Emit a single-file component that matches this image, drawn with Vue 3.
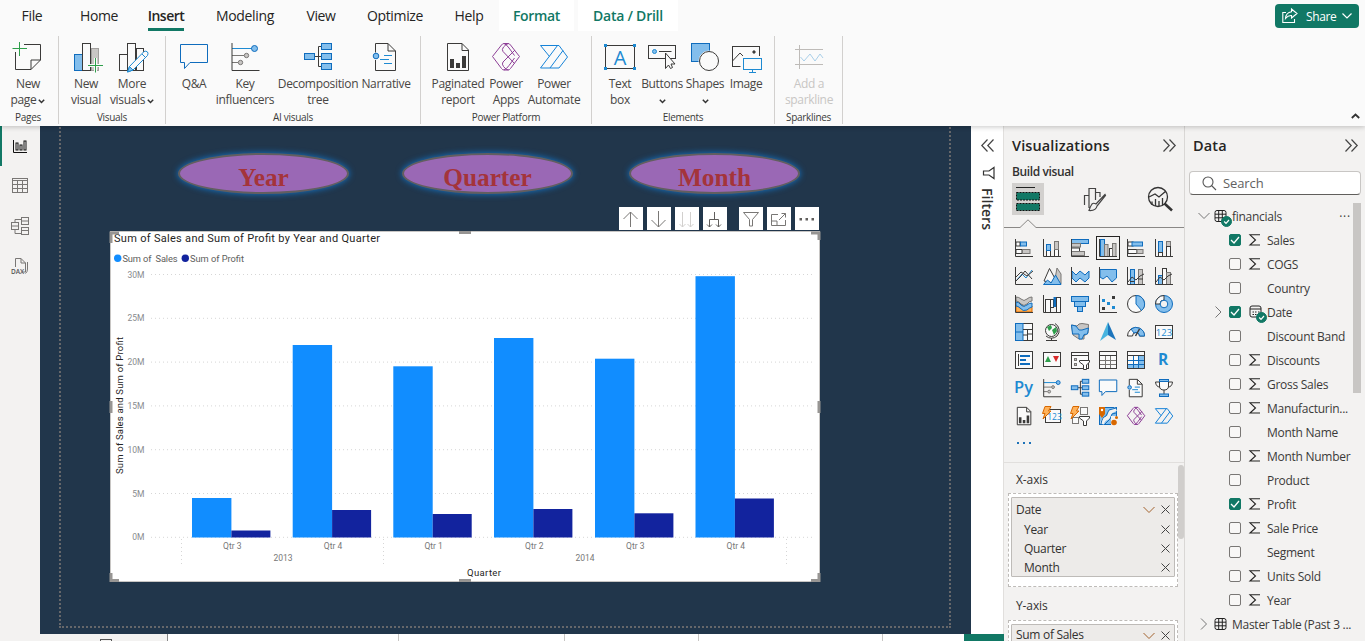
<script setup>
const K = '#3b3a39', B = '#0f6cbd', F = '#83beec', G = '#c8c6c4', GS = '#797775', W = '#fafafa', L = '#1e8ad2', P = '#8e3f97', N = '#2e9f4b', O = '#d86800'
const r = (x, y, w, h, f = 'none', s = K) => `<rect x="${x}" y="${y}" width="${w}" height="${h}" fill="${f}" stroke="${s}"/>`
const p = (d, s = K, f = 'none', w = 1) => `<path d="${d}" stroke="${s}" fill="${f}" stroke-width="${w}"/>`
const c = (x, y, q, f = 'none', s = K) => `<circle cx="${x}" cy="${y}" r="${q}" fill="${f}" stroke="${s}"/>`
const t = (x, y, size, s, f, w = 400) => `<text x="${x}" y="${y}" font-size="${size}" fill="${f}" font-weight="${w}" font-family="Open Sans, sans-serif" text-anchor="middle">${s}</text>`

const influencers = p('M2 6.5H22', L) + p('M2 13.5H14M2 20.5H8', GS) + p('M2 1V28.5H29.5') + c(24.5, 6.5, 3, F, B) + c(16.5, 13.5, 2.2, G, GS) + c(10.5, 20.5, 2.2, G, GS)
const decomposition = p('M11.5 14.5H18.5M18.5 4.5H15.5V24.5H18.5') + r(1.5, 11.5, 10, 6, F, B) + r(18.5, 1.5, 10, 6, F, B) + r(18.5, 11.5, 10, 6, F, B) + r(18.5, 21.5, 10, 6, F, B)
const bubble = p('M1.5 2.5H28.5V20.5H11L5.5 26.5V20.5H1.5Z', B, W)
const narrative = p('M4.5 10.5V1.5H17L24.5 9V28.5H4.5V18', K, W) + p('M17 1.5V9H24.5') + p('M13 13.5H21M9 17.5H18M13 21.5H21', L) + c(5, 14, 2.8, F, B)
const paginated = p('M4.5 1.5H19L25.5 8V28.5H4.5Z', K, W) + p('M19 1.5V8.5H25.5') + p('M9 17V26M15 21V26M21 14V26', K, 'none', 4)
const apps = p('M1.5 14.5L10.5 3Q11.5 1.5 13 1.5H17Q18.5 1.5 19.5 3L28.5 14.5L19.5 26.5Q18.5 28 17 28H13Q11.5 28 10.5 26.5Z', P) + p('M17.5 1.5Q15 2 12.5 5Q10.500 7.500 12 9.500L23.500 21.500M24 8L12 20Q10.500 22 12.500 24.500Q15 28 17.500 28M13 1.500Q15.500 2.500 18 6L23.500 13.500M13 28Q15.500 27 18 23.500L23.500 16', P)
const automate = p('M1.5 3.5H20L28.5 15L20 26H1.5L18.5 3.5M1.5 3.5L10.5 14.5M11 26L24 8.5', '#1683d8')

const ribbon = {
  page: p('M2.5 10V27.5H18L27.5 18V2.5H11M18 27.5V18H27.5') + p('M6.5 0V14M-.5 6.5H14', N),
  newVisual: r(3.5, 12.5, 8, 16, F, B) + r(20.5, 6.5, 7, 22, G, '#a19f9d') + r(11.5, 1.5, 8, 27, W) + p('M24.5 16V30.5M17 23.5H32', W, 'none', 3) + p('M24.5 16V30.5M17 23.5H32', N),
  more: r(2.5, 12.5, 8, 16, W) + r(19.5, 6.5, 7, 22, W) + r(10.5, 1.5, 8, 27, W) + p('M27 9.5Q29 8.5 30.5 10Q31.5 11.5 30.5 13.5L16 28L10.5 30L12.5 24.5Z', L, W) + p('M12.5 24.5L16 28L10.5 30Z', L, F) + p('M25 12L28.5 15.5', L),
  qa: bubble, key: influencers, decomp: decomposition, narrative, paginated, apps, automate,
  text: r(.5, 3.5, 29, 23, W) + `<path fill="${L}" d="M-1 2h3v3h-3zM28 2h3v3h-3zM-1 25h3v3h-3zM28 25h3v3h-3z"/>` + t(15, 22.5, 20, 'A', L),
  buttons: r(1.5, 3.5, 27, 13, W) + c(7.5, 9.5, 2, F, L) + p('M12 9.5H24.5') + p('M18.5 11V26.5L21.5 23L23.5 26.5L25.5 25.5L24 22H28Z', K, W),
  shapes: r(1.5, 1.5, 18, 18, F, B) + c(19, 19, 10, W, W) + c(19, 19, 9.5, W, K),
  image: r(1.5, 4.5, 27, 20, W) + p('M1.5 19L9 11L15 17') + c(23, 10, 1.2, K, K) + p('M11 15.5H31.5V29H11Z', W, W, 3) + r(12.5, 16.5, 18, 11, W, L) + p('M21.5 27.5V30.5M18 30.5H25', L),
  spark: p('M1 7.5H29M1 22.5H29M5.5 3V27', '#bebbb8') + p('M6.5 15L10 19L16 12L21 19L26 12L29 16', '#a9cfe9'),
}
const groups = [
  { name: 'Pages', w: 59, pad: 0, items: [['page', 56, 'New', 'page', 1]] },
  { name: 'Visuals', w: 107, pad: 4, items: [['newVisual', 46, 'New', 'visual'], ['more', 46, 'More', 'visuals', 1]] },
  { name: 'AI visuals', w: 255, pad: 8, items: [['qa', 40, 'Q&A', ''], ['key', 62, 'Key', 'influencers'], ['decomp', 84, 'Decomposition', 'tree'], ['narrative', 52, 'Narrative', '']] },
  { name: 'Power Platform', w: 171, pad: 8, items: [['paginated', 58, 'Paginated', 'report'], ['apps', 38, 'Power', 'Apps'], ['automate', 58, 'Power', 'Automate']] },
  { name: 'Elements', w: 183, pad: 8, items: [['text', 40, 'Text', 'box'], ['buttons', 44, 'Buttons', '', 1], ['shapes', 42, 'Shapes', '', 1], ['image', 40, 'Image', '']] },
  { name: 'Sparklines', w: 68, pad: 2, off: 1, items: [['spark', 64, 'Add a', 'sparkline']] },
]
const tabs = [['File', 64], ['Home', 70], ['Insert', 64], ['Modeling', 94], ['View', 58], ['Optimize', 90], ['Help', 58]]

const ax = p('M1.5 1V18.5H19')
const mini = s => `<g transform="scale(.645) translate(.6 .6)" stroke-width="1.55">${s.replaceAll('stroke-width="1"', 'stroke-width="1.55"')}</g>`
const bolt = p('M3 .5H9L6.5 5H9L1 13L3 7.5H.5Z', O, '#ffb25a')
const funnel = p('M9.5 10.5H19.5V12L16.5 15V19.5H13.5V15L9.5 12Z', K, '#fff')
const viz = [
  r(2, 4, 4, 4, W) + r(6.5, 4, 6, 4, F, B) + r(2, 11.5, 6, 4, W) + r(8.5, 11.5, 7.5, 4, G, GS) + ax,
  r(4.5, 12.5, 4, 6, W) + r(4.5, 6.5, 4, 6, F, B) + r(12.5, 11.5, 4, 7, W) + r(12.5, 3.5, 4, 8, G, GS) + ax,
  r(1.5, 1.5, 17, 4, F, B) + r(1.5, 5.5, 9, 3.5, G, GS) + r(1.5, 10, 8, 3.5, W) + r(1.5, 13.5, 13, 4, G, GS) + ax,
  r(2.5, 1.5, 4, 17, F, B) + r(6.5, 6.5, 3.5, 12, G, GS) + r(11.5, 10.5, 3, 8, W) + r(14.5, 5.5, 3.5, 13, G, GS) + ax,
  r(2, 4, 5, 4, W) + r(6, 4, 10.5, 4, F, B) + r(2, 11.5, 9, 4, W) + r(11, 11.5, 6, 4, G, GS) + ax,
  r(4.5, 3.5, 4, 11, F, B) + r(4.5, 14.5, 4, 4, W) + r(12.5, 3.5, 4, 5, G, GS) + r(12.5, 8.5, 4, 10, W) + ax,
  p('M2 15L8 8L12 12L18 4', L) + p('M2 11L7 6L13 10L19 5') + p('M2 15L7 10L11 5L18 13') + ax,
  p('M12 18L15 2L19 8V18Z', GS, G) + p('M2 15L7.5 2.5L16 18Z', K, W) + p('M1.500 18.500L5.500 14L9 17L13.500 9L19 18.500Z', B, F),
  p('M2 5L6 9L10 5L15 9L19 5V12L15 16L10 12L6 16L2 12Z', B, F) + ax,
  p('M2 3.5H18.5V12L14 16L9 10L5 13L2 11Z', B, F) + ax,
  r(4.5, 3.5, 4, 15, F, B) + r(12.5, 3.5, 4, 15, G, GS) + p('M2 16L6 11L10 14L14 10L18 8') + p('M4 15.5h4.5M12 13h5', K, W) + ax,
  r(4.5, 9.5, 4, 9, F, B) + r(8.5, 2.5, 4, 16, W) + r(12.5, 6.5, 4, 12, G, GS) + p('M2 16L6 11L10 14L14 10L18 8') + ax,
  p('M2 9H7L10 16L13 12H18V18H2Z', O, '#ffb25a') + p('M2 3Q5 3 7 5Q10 8 13 5Q15 3 18 3V7Q15 7 13 10Q10 13 7 10Q5 7 2 7Z', GS, G) + p('M2 8Q5 8 7 11Q10 14 13 11Q15 9 18 9V13Q15 14 13 16Q9 18 6 14Q4 12 2 12Z', B, F) + ax,
  r(3.5, 5.5, 5, 13, W) + r(8.5, 5.5, 3, 8, W) + p('M13 3V13', B, F, 3) + r(14.5, 3.5, 4, 15, W) + ax,
  r(1.5, 2.5, 17, 5, F, B) + r(4.5, 7.5, 11, 5, F, B) + r(7.5, 12.5, 5, 5, F, B),
  `<path fill="${L}" d="M4 5h3v3H4zM9 8h3v3H9zM14 12h3v3h-3z"/><path fill="${K}" d="M14 2h3v3h-3zM4 13h3v3H4z"/>` + ax,
  c(10, 10, 8.5, W) + p('M10 10V1.5A8.5 8.5 0 0 1 15.5 16.5Z', B, F),
  c(10, 10, 8.5, F, B) + p('M10 1.5A8.5 8.5 0 0 0 1.5 10H6A4 4 0 0 1 10 6Z', K, W) + c(10, 10, 3.8, '#f3f2f1', B),
  r(1.5, 1.5, 17, 17, W) + r(1.5, 1.5, 7.5, 17, F, B) + p('M1.5 10H9', B) + p('M9 7.5H18.5M13.5 7.5V18.5M9 13H13.5M13.5 12H18.5'),
  c(9.5, 8.5, 6, W) + `<path fill="${N}" d="M5 5l4-2 1 3-3 3zM10 8l4-3 1 4-3 4z"/>` + p('M13 1.5A8 8 0 0 1 15 14A8 8 0 0 1 4 14M9.5 16V18.5M4 18.5H15'),
  p('M1.5 3L7 4L9 2L12 1.500L18.500 2.500L18 11L14 14V17H9L3 13Z', GS, G) + p('M1.5 3L6 4L9 8L12 8L18.500 6L17.500 12L14 12.500L12 17H9V12H2.500Z', B, F),
  `<path fill="#1c75bc" d="M10 0L18 18L10 13Z"/><path fill="#48b4df" d="M10 0L10 13L2 19Z"/>`,
  p('M1.5 14A8.5 8.5 0 0 1 18.5 14H13.5A3.5 3.5 0 0 0 6.5 14Z', K, W) + p('M5 7A8.5 8.5 0 0 1 18.5 14H13.5A3.5 3.5 0 0 0 8 11Z', B, F) + p('M13.5 7L9.5 14', K, 'none', 1.5),
  r(1.5, 3.5, 17, 13, W) + t(10, 13.5, 9.5, '123', L),
  r(1.5, 1.5, 17, 17, W) + p('M4.500 4V16') + p('M6 6H16M6 10H12M6 14H16', B, 'none', 2),
  r(1.5, 2.5, 17, 14, W) + `<path fill="${N}" d="M3 12h6L6 6z"/><path fill="#d92c2c" d="M11 6h6l-3 6z"/>`,
  r(1.5, 2.5, 17, 16, W) + p('M1.5 5.5H18.5') + r(4.5, 8.5, 2, 2, G, GS) + r(4.5, 13.5, 2, 2, G, GS) + funnel,
  r(1.5, 1.5, 17, 17, W) + p('M1.5 10.5H18.5M1.5 14.5H18.5M7.500 6V18.5M12.500 6V18.5', GS) + r(1.5, 1.5, 17, 17) + p('M1.5 5.500H18.5'),
  r(1.5, 1.5, 17, 17, W) + `<path fill="${F}" d="M13 6h5.500v12h-5.500zM2 14.500h16V18H2z"/>` + p('M1.5 10.5H18.5M1.5 14.5H18.5M7.500 6V18.5M12.500 6V18.5', B) + r(1.5, 1.5, 17, 17) + p('M1.5 5.500H18.5'),
  t(9, 15, 15.5, 'R', L, 700),
  t(9.5, 15, 16.5, 'Py', L, 600),
  mini(influencers), mini(decomposition), mini(bubble), mini(narrative),
  p('M5.5 1.5H14.5V8Q14.500 12 10 12Q5.500 12 5.500 8ZM5.500 4H1.500Q2 9 6 9M14.500 4H18.500Q18 9 14 9M10 12V16', K, W) + r(5.5, 1.5, 9, 2, F, B) + r(5.5, 16, 9, 2.5, F, B),
  mini(paginated),
  r(3.5, 3.5, 15, 13, W) + t(12.500, 14, 8.500, '123', L) + bolt,
  r(10.5, 1.5, 7, 7, W, GS) + r(2.5, 11.500, 6, 6, W, GS) + funnel + bolt,
  r(1.5, 1.5, 17, 17, F, B) + p('M4 18Q5 13 9 12Q12 11 12 6L18 3', '#f3f2f1', 'none', 4) + p('M3 18Q4 11 8 10L11 4L18 2M7 18L12 13L14 8L18 7', B) + `<path fill="${O}" d="M1 1h6v7l-3 4-3-4z"/><circle cx="4" cy="4" r="1.200" fill="#fff"/><rect x="13" y="10" width="7" height="10" fill="#f3f2f1"/><circle cx="16" cy="16.500" r="2.800" fill="${O}"/><circle cx="18.500" cy="11.500" r="1.500" fill="${O}"/>`,
  mini(apps), mini(automate),
]

const nav = [
  p('M3.500 4V16.500H17', '#111') + r(6, 7, 2, 7, 'none', '#111') + r(10, 9, 2, 5, 'none', '#111') + r(14, 5, 2, 9, 'none', '#111'),
  r(2.500, 2.500, 15, 14, 'none', GS) + p('M2.500 4.500H17.500M2.500 8.500H17.500M2.500 12.500H17.500M7.500 4.500V16.500M12.500 4.500V16.500', GS),
  r(1.500, 6.500, 7, 7, 'none', GS) + r(11.500, 1.500, 7, 7, 'none', GS) + r(11.500, 11.500, 7, 7, 'none', GS) + p('M1.500 10H8.500M11.500 5H18.500M11.500 14.500H18.500M5 6V3.500H11.500M5 14V17.500H11.500', GS),
  p('M5.500 11V2.500H11L15.500 7V16H12M11 2.500V7H15.500M17.500 6V13Q17.500 16 15.500 17.500', GS) + t(7.500, 17.500, 6.500, 'DAX', '#555', 600),
]
const tools = [
  p('M11.500 20V5M4.500 12L11.500 5L18.500 12', '#797775'), p('M11.500 4V20M4.500 13L11.500 20L18.500 13', '#797775'),
  p('M7.500 5V20M4.500 17L7.500 20L10.500 17M15.500 5V20M12.500 17L15.500 20L18.500 17', '#d2d0ce'),
  p('M11.500 5V12.500M6.500 20V12.500H15.500V20M4 17.500L6.500 20L9 17.500M13 17.500L15.500 20L18 17.500', '#605e5c'),
  p('M4.500 5.500H19.500L13.500 12.500V19H10.500V12.500Z', '#797775'),
  p('M11 7.500H4.500V18.500H18.500V13M4.500 14H10V18.500M12 13L18.500 6.500M14.500 6.500H18.500V10.500', '#797775'),
  `<path fill="#605e5c" d="M4.500 11h2.500v2.500h-2.500zM10.500 11h2.500v2.500h-2.500zM16.500 11h2.500v2.500h-2.500z"/>`,
]
const bars = [
  [192, 498, 530.5, 'Qtr 3'], [292.7, 345, 510, 'Qtr 4'], [393.3, 366.3, 514, 'Qtr 1'],
  [494, 338, 509, 'Qtr 2'], [595, 358.7, 513.3, 'Qtr 3'], [695.5, 276.2, 498.5, 'Qtr 4'],
]
const ticks = [30, 25, 20, 15, 10, 5, 0].map(v => ({ v: v + 'M', y: 537.3 - v * 8.76 }))
const fields = [
  ['Sales', 1, 1], ['COGS', 0, 1], ['Country', 0, 0], ['Date', 1, 2], ['Discount Band', 0, 0], ['Discounts', 0, 1], ['Gross Sales', 0, 1],
  ['Manufacturin...', 0, 1], ['Month Name', 0, 0], ['Month Number', 0, 1], ['Product', 0, 0], ['Profit', 1, 1], ['Sale Price', 0, 1],
  ['Segment', 0, 0], ['Units Sold', 0, 1], ['Year', 0, 1],
]
</script>

<template>
  <div class="app">
    <header class="ribbon">
      <nav class="tabs">
        <span v-for="[name, w] in tabs" :key="name" class="tab" :class="{ active: name === 'Insert' }" :style="{ width: w + 'px' }"><b>{{ name }}</b></span>
        <span class="tab ctx format"><b>Format</b></span>
        <span class="tab ctx drill"><b>Data / Drill</b></span>
        <button class="share">
          <svg width="16" height="16" fill="none" stroke="#fff" stroke-width="1.1"><path d="M4 4.500H.800V14.500H12.500V11M9.500 1L15 5.500L9.500 10V7.500Q6 7.200 3.500 10.500Q4 4.500 9.500 3.800Z" /></svg>
          <span>Share</span>
          <svg width="10" height="6" fill="none" stroke="#fff" stroke-width="1.2"><path d="M.5 .5L5 5L9.500 .5" /></svg>
        </button>
      </nav>
      <div class="groups">
        <section v-for="g in groups" :key="g.name" class="group" :style="{ width: g.w + 'px' }">
          <div class="items" :style="{ paddingLeft: g.pad + 'px' }">
            <div v-for="i in g.items" :key="i[0]" class="item" :class="{ off: g.off }" :style="{ width: i[1] + 'px' }">
              <svg width="30" height="30" fill="none" v-html="ribbon[i[0]]" />
              <span>{{ i[2] }}</span>
              <span class="second">{{ i[3] }}<svg v-if="i[4]" width="7" height="5" fill="none" stroke="#333" stroke-width="1.500"><path d="M.8 .8L3.500 3.500L6.200 .8" /></svg></span>
            </div>
          </div>
          <div class="gname" :style="{ paddingRight: g.name === 'Pages' ? '2px' : 0 }">{{ g.name }}</div>
        </section>
        <svg class="collapse" width="9" height="6" fill="none" stroke="#333" stroke-width="1.800"><path d="M.8 5L4.500 1.500L8.200 5" /></svg>
      </div>
    </header>

    <div class="body">
      <aside class="nav">
        <div v-for="(n, i) in nav" :key="i" class="navitem" :class="{ on: i === 0 }"><svg width="20" height="20" fill="none" v-html="n" /></div>
      </aside>
      <div class="work">
        <div class="upper">
          <main class="canvas">
            <div class="paper" />
            <div class="slicer s1"><span>Year</span></div>
            <div class="slicer s2"><span>Quarter</span></div>
            <div class="slicer s3"><span>Month</span></div>
            <div class="toolbar">
              <span v-for="(b, i) in tools" :key="i" class="tool" :class="{ gap: i === 4 }"><svg width="24" height="23" fill="none" v-html="b" /></span>
            </div>
            <svg class="chart" width="712" height="352" viewBox="109 231 712 352">
              <rect x="110.500" y="231.500" width="709" height="350" fill="#fff" stroke="#c8c6c4" />
              <text x="114" y="242" font-size="11" fill="#252423" textLength="266">Sum of Sales and Sum of Profit by Year and Quarter</text>
              <circle cx="117.700" cy="258.300" r="3.700" fill="#118dff" /><text x="122.500" y="262" font-size="9.300" fill="#605e5c" textLength="55">Sum of&nbsp; Sales</text>
              <circle cx="185.300" cy="258.300" r="3.700" fill="#12239e" /><text x="190" y="262" font-size="9.300" fill="#605e5c" textLength="54">Sum of Profit</text>
              <g v-for="k in ticks" :key="k.v">
                <text x="144.500" :y="k.y + 3" font-size="8.500" fill="#888b8e" text-anchor="end">{{ k.v }}</text>
                <line x1="151" x2="813" :y1="k.y" :y2="k.y" stroke="#d6d6d6" stroke-dasharray="1 3" />
              </g>
              <g v-for="b in bars" :key="b[0]">
                <rect :x="b[0]" :y="b[1]" width="39.400" :height="537.500 - b[1]" fill="#118dff" />
                <rect :x="b[0] + 39.400" :y="b[2]" width="39" :height="537.500 - b[2]" fill="#12239e" />
                <text :x="b[0] + 40.300" y="548.500" font-size="8.500" fill="#777" text-anchor="middle">{{ b[3] }}</text>
              </g>
              <path d="M181.500 539V566M383.500 539V566M786.500 539V566" stroke="#d6d6d6" stroke-dasharray="1 3" />
              <text x="283" y="560.500" font-size="8.500" fill="#777" text-anchor="middle">2013</text>
              <text x="585" y="560.500" font-size="8.500" fill="#777" text-anchor="middle">2014</text>
              <text x="467" y="576" font-size="9.500" fill="#252423" textLength="34">Quarter</text>
              <text transform="translate(123 474) rotate(-90)" font-size="9.500" fill="#252423" textLength="137">Sum of Sales and Sum of Profit</text>
              <path d="M111 243V233H119M811 233H819V240M111 573V580.500H119M811 580.500H819V573M459 232.500H471M459 580.500H471M111 401V413M819 401V413" fill="none" stroke="#979593" stroke-width="3" />
            </svg>
          </main>
          <aside class="filters">
            <svg width="13" height="13" fill="none" stroke="#444" stroke-width="1.200"><path d="M6.500 .5L.8 6.500L6.500 12.500M12.500 .5L6.800 6.500L12.500 12.500" /></svg>
            <svg class="ff" width="13" height="12" fill="none" stroke="#333" stroke-width="1.200"><path d="M12 .5V11.500L7 8H1.500V4H7Z" /></svg>
            <span>Filters</span>
          </aside>
        </div>
        <footer class="pages">
          <i class="first"><em /></i><i class="a" /><i class="b" /><i class="c" /><i class="d" /><i class="e" /><i class="green" />
        </footer>
      </div>

      <aside class="viz">
        <div class="head"><h2>Visualizations</h2><svg width="13" height="13" fill="none" stroke="#444" stroke-width="1.200"><path d="M.5 .5L6.200 6.500L.5 12.500M6.500 .5L12.200 6.500L6.500 12.500" /></svg></div>
        <h3>Build visual</h3>
        <div class="modes">
          <span class="mode on"><svg width="32" height="32"><path d="M4 4.500H23" stroke="#222" /><path fill="#117865" stroke="#111" stroke-dasharray="2 1" d="M4.500 9.500H27.500V17H4.500ZM4.500 20.500H27.500V27.500H4.500Z" /></svg></span>
          <span class="mode m2"><svg width="32" height="32" fill="none" stroke="#444" stroke-width="1.200"><path d="M6.500 22V12.500H11V25M11 12.500V5.500H17.500V17M17.500 9.500H22V14M27 11.500L18 21Q15.500 19.500 14 21Q12.500 23 11 27.500Q18 28 19 23L27.500 12.500Z" /></svg></span>
          <span class="mode m3"><svg width="32" height="32" fill="none" stroke="#333" stroke-width="1.300"><circle cx="14" cy="14" r="9.500" /><path d="M5 14L11 11L15 14L22 8M8 22V18.500M11.500 23V16M15 23V18M18.500 22V15" /><path d="M20.500 20.500L28 27.500" stroke-width="2.500" /></svg></span>
        </div>
        <svg class="pointer" width="180" height="10" fill="none" stroke="#8a8886"><path d="M0 8.500H16L24 .8L32 8.500H180" /></svg>
        <div class="grid">
          <span v-for="(v, i) in viz" :key="i" :class="{ sel: i === 3 }"><svg width="20" height="20" fill="none" v-html="v" /></span>
          <span><svg width="20" height="20" fill="#1e72b8"><path d="M3 8h2v2H3zM9 8h2v2H9zM15 8h2v2h-2z" /></svg></span>
        </div>
        <div class="wells">
          <label>X-axis</label>
          <div class="well"><div class="box">
            <p><span>Date</span><svg width="12" height="8" fill="none" stroke="#a3622d"><path d="M.5 1L6 6.500L11.500 1" /></svg><svg class="x" width="9" height="9" stroke="#444"><path d="M.5 .5L8.500 8.500M8.500 .5L.5 8.500" /></svg></p>
            <p v-for="n in ['Year', 'Quarter', 'Month']" :key="n" class="sub"><span>{{ n }}</span><svg class="x" width="9" height="9" stroke="#444"><path d="M.5 .5L8.500 8.500M8.500 .5L.5 8.500" /></svg></p>
          </div></div>
          <label class="y">Y-axis</label>
          <div class="well cut"><div class="box">
            <p><span>Sum of Sales</span><svg width="12" height="8" fill="none" stroke="#a3622d"><path d="M.5 1L6 6.500L11.500 1" /></svg><svg class="x" width="9" height="9" stroke="#444"><path d="M.5 .5L8.500 8.500M8.500 .5L.5 8.500" /></svg></p>
          </div></div>
          <i class="bar" />
        </div>
      </aside>

      <aside class="data">
        <div class="head"><h2>Data</h2><svg width="13" height="13" fill="none" stroke="#444" stroke-width="1.200"><path d="M.5 .5L6.200 6.500L.5 12.500M6.500 .5L12.200 6.500L6.500 12.500" /></svg></div>
        <div class="search"><svg width="15" height="15" fill="none" stroke="#555" stroke-width="1.100"><circle cx="6" cy="6" r="5" /><path d="M9.500 9.500L14 14" /></svg><span>Search</span></div>
        <div class="tree">
          <div class="row table">
            <svg width="12" height="8" fill="none" stroke="#777"><path d="M.5 1L6 6.500L11.500 1" /></svg>
            <svg class="tb" width="19" height="20" fill="none" stroke="#222"><rect x="1" y="4.500" width="11" height="11" rx="2" /><path d="M1 8.200H12M1 11.800H12M4.700 4.500V15.500M8.300 4.500V15.500" /><circle cx="12.500" cy="15.500" r="5" fill="#117865" stroke="#117865" /><path stroke="#fff" stroke-width="1.200" d="M10.200 15.500L12 17.300L15 14" /></svg>
            <span>financials</span><em>···</em>
          </div>
          <div v-for="f in fields" :key="f[0]" class="row">
            <span class="exp"><svg v-if="f[2] === 2" width="8" height="12" fill="none" stroke="#777"><path d="M1.500 .5L7 6L1.500 11.500" /></svg></span>
            <i class="check" :class="{ on: f[1] }"><svg v-if="f[1]" width="10" height="10" fill="none" stroke="#fff" stroke-width="1.300"><path d="M1 5L4 8L9 2" /></svg></i>
            <span class="kind">
              <svg v-if="f[2] === 1" width="12" height="12" fill="none" stroke="#252423" stroke-width="1.100"><path d="M11 .8H1L6.500 6L1 11H11" /></svg>
              <svg v-if="f[2] === 2" width="20" height="20" fill="none" stroke="#222"><rect x="1" y="4" width="11" height="11" rx="2" /><path d="M1 7H12M3.500 10H5M6 10H7.500M9 10H10.500M3.500 12.500H5M6 12.500H7.500" /><circle cx="12.500" cy="15.500" r="5" fill="#117865" stroke="#117865" /><path stroke="#fff" stroke-width="1.200" d="M10.200 15.500L12 17.300L15 14" /></svg>
            </span>
            <span class="name">{{ f[0] }}</span>
          </div>
          <div class="row table last">
            <svg width="12" height="12" fill="none" stroke="#777"><path d="M3 .5L8.500 6L3 11.500" /></svg>
            <svg class="tb" width="19" height="20" fill="none" stroke="#222"><rect x="1" y="4.500" width="11" height="11" rx="2" /><path d="M1 8.200H12M1 11.800H12M4.700 4.500V15.500M8.300 4.500V15.500" /></svg>
            <span>Master Table (Past 3 ...</span>
          </div>
          <i class="bar" />
        </div>
      </aside>
    </div>
  </div>
</template>

<style>
html, body { margin: 0; overflow: hidden; }
</style>
<style scoped>
* { box-sizing: border-box; }
svg { display: block; flex: none; overflow: visible; }
.app { width: 1365px; height: 641px; overflow: hidden; font-family: "Open Sans", "Noto Sans", sans-serif; font-size: 12px; color: #323130; background: #f3f2f1; display: flex; flex-direction: column; }
.ribbon { height: 126px; flex: none; background: #fafafa; position: relative; z-index: 2; box-shadow: 0 1px 5px rgba(0,0,0,.22); }
.tabs { height: 31px; display: flex; }
.tab { display: flex; justify-content: center; font-size: 14px; letter-spacing: -.35px; color: #252423; line-height: 32px; white-space: nowrap; }
.tab b { font-weight: 400; }
.tab.active b { font-weight: 600; letter-spacing: -.5px; border-bottom: 3px solid #117865; height: 31px; }
.ctx { background: #fff; color: #117865; }
.ctx b { font-weight: 600; }
.format { width: 75px; margin-left: 1px; }
.drill { width: 100px; margin-left: 4px; letter-spacing: -.25px; }
.share { margin: 4px 6px 0 auto; width: 84px; height: 24px; border: 0; border-radius: 4px; background: #117865; color: #fff; display: flex; align-items: center; padding: 0 0 0 7px; font: 500 12px "Open Sans", sans-serif; letter-spacing: -.35px; }
.share span { margin: 0 5px 0 8px; }
.groups { display: flex; height: 88px; margin-top: 5px; align-items: stretch; }
.group { border-right: 1px solid #d2d0ce; display: flex; flex-direction: column; }
.items { display: flex; height: 76px; padding-top: 6px; }
.item { display: flex; flex-direction: column; align-items: center; color: #484644; letter-spacing: -.33px; line-height: 16px; white-space: nowrap; }
.item svg { margin-bottom: 4px; }
.item.off { color: #c8c6c4; }
.item.off span { font-weight: 500; }
.second { display: flex; align-items: center; gap: 2px; height: 16px; }
.item .second svg { margin: 2px 0 0; }
.gname { font-size: 10px; line-height: 14px; padding-top: 1.500px; letter-spacing: -.3px; text-align: center; color: #3b3a39; }
.collapse { margin: auto 5px 5px auto; }
.body { flex: 1; display: flex; min-height: 0; }
.nav { width: 40px; background: #f3f2f1; flex: none; }
.navitem { height: 40px; padding: 10px; }
.navitem.on { border-left: 2px solid #117865; padding-left: 8px; }
.work { width: 964px; flex: none; display: flex; flex-direction: column; }
.upper { height: 508px; display: flex; }
.canvas { width: 931px; background: #21364b; position: relative; overflow: hidden; }
.paper { position: absolute; left: 19px; top: -10px; width: 892px; height: 512px; border: 2px dotted #66676a; }
.slicer { position: absolute; top: 27px; width: 171px; height: 41px; border-radius: 50%; background: #9a68b5; border: 2px solid #625e60; box-shadow: 0 0 6px 0 #1278cf; text-align: center; font: bold 25.300px/45px "Liberation Serif", serif; color: #a4343a; }
.s1 { left: 138px; } .s2 { left: 362px; } .s3 { left: 589px; }
.toolbar { position: absolute; left: 579px; top: 81px; display: flex; gap: 4px; }
.tool { width: 24px; height: 23px; background: #fff; }
.tool.gap { margin-left: 8px; }
.chart { position: absolute; left: 69px; top: 105px; font-family: Roboto, sans-serif; }
.filters { width: 33px; background: #fff; border-right: 1px solid #e1dfdd; display: flex; flex-direction: column; align-items: center; padding-top: 13px; }
.ff { margin: 15px 0 9px 3px; }
.filters span { writing-mode: vertical-rl; font-size: 14px; font-weight: 600; letter-spacing: .05px; line-height: 20px; }
.pages { height: 7px; display: flex; background: #fff; }
.pages i { border-right: 1px solid #c8c6c4; flex: none; }
.pages .first { width: 128px; background: #f3f2f1; border-color: #888; padding: 5px 0 0 60px; }
.first em { display: block; width: 12px; height: 6px; border: 1px solid #555; }
.pages .a { width: 231px; } .pages .b { width: 166px; } .pages .c { width: 134px; } .pages .d { width: 184px; } .pages .e { width: 81px; border: 0; }
.pages .green { width: 40px; background: #117865; border: 0; }
.viz { width: 180px; flex: none; background: #f3f2f1; display: flex; flex-direction: column; }
.head { height: 38px; display: flex; align-items: center; justify-content: space-between; padding: 0 8px; }
h2 { margin: 0; font-size: 14.500px; font-weight: 600; letter-spacing: .12px; color: #252423; }
h3 { margin: 0 8px; font-size: 12px; line-height: 16px; font-weight: 600; letter-spacing: -.38px; color: #323130; }
.modes { display: flex; padding: 3px 8px 0; height: 35px; }
.mode { width: 32px; height: 32px; }
.mode.on { background: #d2d0ce; }
.m2 { margin-left: 34px; } .m3 { margin-left: 34px; }
.pointer { margin-top: 4px; }
.grid { display: grid; grid-template-columns: repeat(6, 28px); grid-auto-rows: 28px; padding: 5px 6px 0; height: 233px; }
.grid span { padding: 4px 4px 2px; }
.grid .sel svg { outline: 1px solid #252423; outline-offset: 1px; }
.wells { border-top: 1px solid #e1dfdd; position: relative; flex: 1; overflow: hidden; padding-left: 4px; }
label { display: block; height: 30px; padding: 9px 8px 0; line-height: 16px; letter-spacing: -.1px; }
label.y { height: 33px; padding-top: 11px; }
.well { width: 170px; border: 1px dashed #bebbb8; background: #fff; height: 94px; padding: 3px 2px; }
.box { background: #edebe9; border: 1px solid #bebbb8; height: 80px; padding-top: 1px; border-radius: 1px; }
.box p { margin: 0; height: 19.200px; display: flex; align-items: center; padding: 0 4px; letter-spacing: -.3px; }
.box p:first-child { height: 21px; }
.well.cut p { height: 16px; line-height: 14px; align-items: flex-end; }
.cut svg { margin-bottom: 2px; }
.box p span { flex: 1; }
.box .sub { padding-left: 12px; }
.box .x { margin-left: 6px; }
.wells .bar { position: absolute; right: 0; top: 2px; width: 6px; height: 74px; border-radius: 3px; background: #d0cecc; }
.data { width: 181px; flex: none; border-left: 1px solid #d9d7d5; display: flex; flex-direction: column; }
.data .head { padding-right: 7px; }
.search { margin: 7px 4px 0 4px; width: 172px; height: 24px; border: 1px solid #c8c6c4; border-bottom-color: #605e5c; border-radius: 4px; background: #fff; display: flex; align-items: center; padding-left: 12px; gap: 6px; font-size: 13px; letter-spacing: -.1px; color: #616161; }
.tree { margin-top: 9px; position: relative; }
.row { height: 24px; display: flex; align-items: center; letter-spacing: -.27px; white-space: nowrap; color: #3b3a39; }
.table { padding-left: 13px; }
.tb { margin: 0 -1px 0 4px; }
.table em { margin-left: auto; margin-right: 14px; font-style: normal; letter-spacing: .8px; }
.exp { width: 44px; padding-left: 29px; }
.check { width: 12px; height: 12px; border: 1px solid #797775; border-radius: 2px; background: #f8f7f6; }
.check.on { background: #117865; border-color: #117865; }
.kind { width: 18px; margin: 0 0 0 8px; height: 20px; display: flex; align-items: center; }
.tree .bar { position: absolute; left: 168px; top: -1px; width: 8px; height: 190px; background: #c8c6c4; }
</style>
